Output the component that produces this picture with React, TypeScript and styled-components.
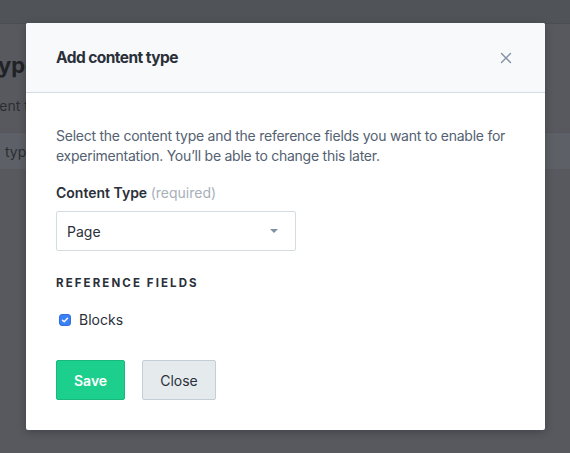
import React, { useState } from "react";
import styled, { createGlobalStyle } from "styled-components";

const GlobalStyle = createGlobalStyle`
  html, body {
    margin: 0;
    padding: 0;
    width: 570px;
    height: 453px;
    overflow: hidden;
    font-family: Inter, "Liberation Sans", Arial, sans-serif;
    -webkit-font-smoothing: antialiased;
  }
`;

// page behind the dimmed overlay
const Page = styled.div`
  position: relative;
  width: 570px;
  height: 453px;
  background: #57595f;
  overflow: hidden;
`;

const PageHeader = styled.div`
  height: 23px;
  background: #505358;
  border-bottom: 1px solid #4b4e54;
`;

const PageContent = styled.div`
  display: flex;
  flex-direction: column;
  padding-top: 27px;
`;

const PageTitle = styled.h1`
  margin: 0 0 0 -102px;
  font-size: 22px;
  line-height: 28px;
  font-weight: 700;
  color: #202226;
  white-space: nowrap;
`;

const PageText = styled.p`
  margin: 17px 0 0 -32px;
  font-size: 14px;
  line-height: 20px;
  color: #2b2e33;
  white-space: nowrap;
`;

const PageTab = styled.div`
  margin-top: 16px;
  height: 36px;
  display: flex;
  align-items: center;
  padding-left: 5px;
  background: #5d6066;
  border-top: 1px solid #53565c;
  font-size: 14px;
  color: #2b2e33;
  white-space: nowrap;
`;

const Modal = styled.div`
  position: absolute;
  left: 26px;
  top: 23px;
  width: 519px;
  height: 407px;
  background: #fff;
  border-radius: 2px;
  box-shadow: 0 2px 8px rgba(0, 0, 0, 0.25);
  display: flex;
  flex-direction: column;
  overflow: hidden;
`;

const ModalHeader = styled.div`
  height: 70px;
  box-sizing: border-box;
  display: flex;
  align-items: center;
  justify-content: space-between;
  padding: 0 30px;
  background: #f7f9fa;
  border-bottom: 1px solid #d3dce0;
`;

const ModalTitle = styled.h2`
  margin: 0;
  font-size: 15.5px;
  font-weight: 700;
  color: #2a3039;
  letter-spacing: -0.55px;
`;

const CloseIcon = styled.button`
  border: 0;
  background: none;
  padding: 0;
  width: 18px;
  height: 18px;
  display: flex;
  align-items: center;
  justify-content: center;
  cursor: pointer;
`;

const ModalBody = styled.div`
  display: flex;
  flex-direction: column;
  padding: 33px 30px 0;
`;

const Intro = styled.p`
  margin: 0;
  font-size: 14px;
  line-height: 20px;
  letter-spacing: -0.25px;
  color: #536171;
`;

const FieldLabel = styled.label`
  margin-top: 17px;
  font-size: 14px;
  line-height: 20px;
  font-weight: 600;
  color: #2a3039;
`;

const Hint = styled.span`
  font-weight: 400;
  color: #a7b0b9;
`;

const SelectBox = styled.div`
  margin-top: 8px;
  width: 240px;
  height: 40px;
  box-sizing: border-box;
  border: 1px solid #d3dce0;
  border-radius: 2px;
  display: flex;
  align-items: center;
  justify-content: space-between;
  padding: 0 17px 0 10px;
  font-size: 14px;
  color: #2a3039;
`;

const Caret = styled.span`
  width: 0;
  height: 0;
  border-left: 4px solid transparent;
  border-right: 4px solid transparent;
  border-top: 4px solid #8091a5;
`;

const SectionTitle = styled.h3`
  margin: 24px 0 0;
  font-size: 11.5px;
  line-height: 16px;
  font-weight: 700;
  letter-spacing: 2.1px;
  text-transform: uppercase;
  color: #2a3039;
`;

const CheckRow = styled.label`
  margin-top: 19px;
  display: flex;
  align-items: center;
  gap: 8px;
  font-size: 14px;
  line-height: 20px;
  color: #2a3039;
  padding-left: 3px;
`;

const Check = styled.span<{ checked: boolean }>`
  width: 12px;
  height: 12px;
  border-radius: 3px;
  box-sizing: border-box;
  background: ${(p) => (p.checked ? "#3c80f6" : "#fff")};
  border: 1px solid ${(p) => (p.checked ? "#2f6fe0" : "#b4c3ca")};
  display: flex;
  align-items: center;
  justify-content: center;
`;

const Actions = styled.div`
  margin-top: 30px;
  display: flex;
  gap: 17px;
`;

const Button = styled.button<{ primary?: boolean }>`
  height: 40px;
  box-sizing: border-box;
  padding: 0 17px;
  border-radius: 2px;
  font-family: inherit;
  font-size: 14px;
  font-weight: ${(p) => (p.primary ? 600 : 400)};
  cursor: pointer;
  background: ${(p) => (p.primary ? "#1dcf8c" : "#e5ebed")};
  color: ${(p) => (p.primary ? "#fff" : "#2a3039")};
  border: 1px solid ${(p) => (p.primary ? "#17b97c" : "#c3cfd5")};
`;

export default function App() {
  const [checked, setChecked] = useState(true);

  return (
    <>
      <GlobalStyle />
      <Page>
        <PageHeader />
        <PageContent>
          <PageTitle>Content types</PageTitle>
          <PageText>Content types define the structure</PageText>
          <PageTab>type</PageTab>
        </PageContent>

        <Modal>
          <ModalHeader>
            <ModalTitle>Add content type</ModalTitle>
            <CloseIcon aria-label="Close">
              <svg width="12" height="12" viewBox="0 0 12 12">
                <path
                  d="M1.5 1.5L10.5 10.5M10.5 1.5L1.5 10.5"
                  stroke="#8091a5"
                  strokeWidth="1.4"
                  strokeLinecap="round"
                />
              </svg>
            </CloseIcon>
          </ModalHeader>
          <ModalBody>
            <Intro>
              Select the content type and the reference fields you want to
              enable for experimentation. You’ll be able to change this later.
            </Intro>
            <FieldLabel>
              Content Type <Hint>(required)</Hint>
            </FieldLabel>
            <SelectBox>
              <span>Page</span>
              <Caret />
            </SelectBox>
            <SectionTitle>Reference fields</SectionTitle>
            <CheckRow onClick={() => setChecked(!checked)}>
              <Check checked={checked}>
                {checked && (
                  <svg width="8" height="8" viewBox="0 0 8 8">
                    <path
                      d="M1.5 4.2L3.2 5.8L6.5 2.2"
                      stroke="#fff"
                      strokeWidth="1.4"
                      fill="none"
                      strokeLinecap="round"
                      strokeLinejoin="round"
                    />
                  </svg>
                )}
              </Check>
              Blocks
            </CheckRow>
            <Actions>
              <Button primary>Save</Button>
              <Button>Close</Button>
            </Actions>
          </ModalBody>
        </Modal>
      </Page>
    </>
  );
}
